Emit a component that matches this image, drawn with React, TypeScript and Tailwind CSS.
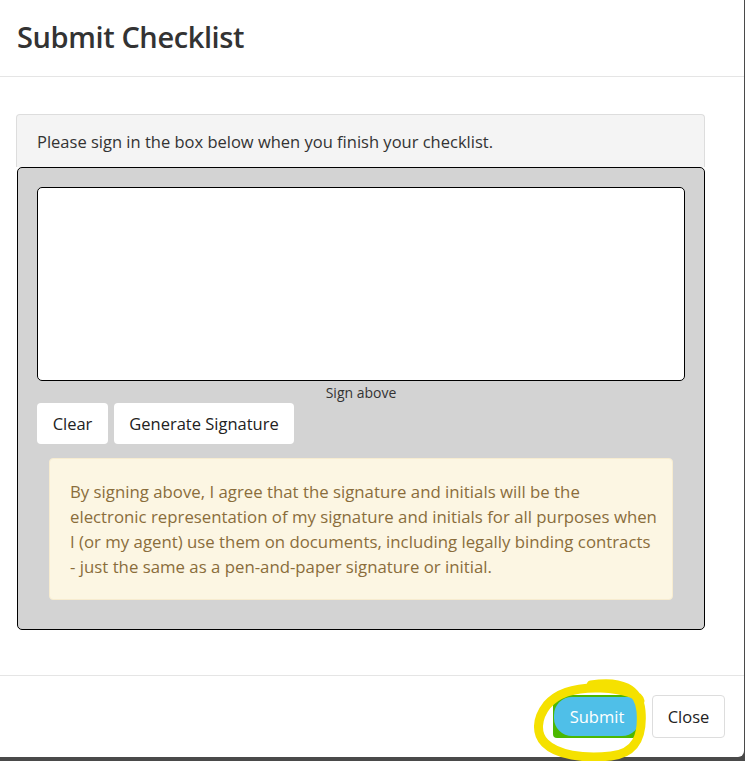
const font = { fontFamily: '"Open Sans", "Noto Sans", sans-serif' };

const SubmitHighlight = () => (
  <svg
    className="pointer-events-none absolute -left-[20px] -top-[16px]"
    width="130"
    height="84"
    viewBox="0 0 130 84"
    fill="none"
  >
    <path
      d="M58 6 C88 1 106 10 108 32 C110 56 104 74 78 77 C50 80 24 76 12 64 C3 55 3 40 14 26 C24 14 42 8 68 9 C92 10 106 16 107 22"
      stroke="#f5e100"
      strokeWidth="9"
      strokeLinecap="round"
      strokeLinejoin="round"
    />
  </svg>
);

export default function App() {
  return (
    <div className="h-[761px] w-[745px] bg-[#4a4a4a]" style={font}>
      <div className="flex h-[757px] w-[744px] flex-col rounded-br-md bg-white text-[#333]">
        {/* Header */}
        <div className="flex h-[77px] items-center border-b border-[#e5e5e5] px-[17px] pb-[2px]">
          <h1 className="text-[29px] font-semibold tracking-[-0.4px] text-[#333]">Submit Checklist</h1>
        </div>

        {/* Body */}
        <div className="flex-1 pl-[16px] pt-[37px]">
          <div className="w-[689px]">
            <div className="flex h-[53px] items-center rounded-t border border-b-0 border-[#ddd] bg-[#f4f4f4] px-[20px] pt-[3px] text-[16.5px]">
              Please sign in the box below when you finish your checklist.
            </div>
            <div className="ml-px flex h-[463px] flex-col rounded-[5px] border border-black bg-[#d3d3d3] p-[19px]">
              <div className="h-[194px] rounded-[5px] border border-black bg-white" />
              <div className="pt-[2px] text-center text-[14px] leading-[20px] text-[#333]">Sign above</div>
              <div className="flex gap-[6px]">
                <button className="h-[41px] w-[71px] rounded bg-white pt-px text-[16.5px] text-[#222]">Clear</button>
                <button className="h-[41px] w-[180px] rounded bg-white pt-px text-[16.5px] text-[#222]">
                  Generate Signature
                </button>
              </div>
              <div className="mx-[12px] mt-[14px] whitespace-nowrap rounded border border-[#f7ecd0] bg-[#fcf6e3] px-[20px] py-[20px] text-[16.8px] leading-[25px] text-[#8a6d3b]">
                By signing above, I agree that the signature and initials will be the
                <br />
                electronic representation of my signature and initials for all purposes when
                <br />
                I (or my agent) use them on documents, including legally binding contracts
                <br />- just the same as a pen-and-paper signature or initial.
              </div>
            </div>
          </div>
        </div>

        {/* Footer */}
        <div className="flex h-[82px] items-start justify-end gap-[11px] border-t border-[#e5e5e5] pr-[19px] pt-[19px]">
          <div className="relative">
            <button className="relative h-[43px] w-[88px] overflow-hidden rounded bg-[#4cb800] pt-px text-[16.5px] text-white">
              <span className="absolute inset-x-[1px] inset-y-[2px] rounded-[18px] rounded-tr-[6px] bg-[#4fbfe8]" />
              <span className="relative">Submit</span>
            </button>
            <SubmitHighlight />
          </div>
          <button className="h-[43px] w-[73px] rounded border border-[#ddd] bg-white pt-px text-[16.5px] text-[#222]">
            Close
          </button>
        </div>
      </div>
    </div>
  );
}
